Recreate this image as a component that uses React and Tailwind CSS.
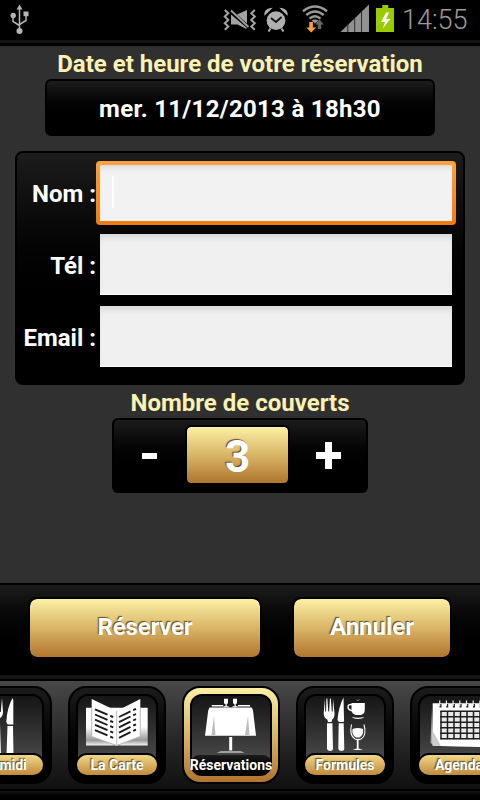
import clsx from 'clsx';

const TABS = [
    { id: 'midi', label: 'Ce midi', Icon: MidiIcon },
    { id: 'carte', label: 'La Carte', Icon: BookIcon },
    { id: 'reservations', label: 'Réservations', Icon: TableIcon },
    { id: 'formules', label: 'Formules', Icon: FormulesIcon },
    { id: 'agenda', label: 'Agenda', Icon: AgendaIcon },
];

const FIELDS = [
    { id: 'nom', label: 'Nom :', focused: true },
    { id: 'tel', label: 'Tél :' },
    { id: 'email', label: 'Email :' },
];

const PANEL = 'border-2 border-black bg-linear-to-b from-[#1c1c1c] to-black to-80%';
const GOLD = 'bg-linear-to-b from-[#fcf0a4] via-[#d9b567] to-[#b0752f]';
const EMBOSSED = 'text-white [text-shadow:-1px_-1px_1px_rgba(50,35,10,0.75)]';

function MidiIcon() {
    return (
        <g fill="#fff">
            <path d="M37 12v14q0 5 3.500 7v4h4v-4q4.500-2 4.500-7l-1-14-1.200 14h-1l-1-14h-1.500l-1 14h-1l-1.500-14z" />
            <path d="M39.500 38h6.500l1 31h-8.500z" />
            <path d="M58.500 12Q53 22 52.300 36l1.400 2.500h5.600V14z" />
            <path d="M53.500 40h5.500l.5 29h-7z" />
        </g>
    );
}

function BookIcon() {
    const rows = [0, 5.2, 10.4, 15.6, 20.8];
    return (
        <g>
            <defs>
                <linearGradient id="page" x1="0" y1="0" x2="0" y2="1">
                    <stop offset="0.5" stopColor="#fff" />
                    <stop offset="0.85" stopColor="#999" />
                    <stop offset="1" stopColor="#fff" />
                </linearGradient>
            </defs>
            <path d="M18 21.700h30.700v38.300q-1.500-1-3.500-.5H18zM79.700 21.700h-31v38.300q1.500-1 3.500-.5h27.500z" fill="url(#page)" />
            <path d="M23.700 13l25 12v34.500l-25-9zM72.300 13L48.700 25v34.500l23.600-9z" fill="#fff" />
            <path d="M48.700 25v34" stroke="#aaa" strokeWidth="0.8" />
            <path d="M23.700 22v28.500l25 9 23.600-9V22" stroke="#aaa" strokeWidth="0.8" fill="none" />
            <g stroke="#1a1a1a" strokeWidth="1.9">
                {rows.map((y) => (
                    <path key={y} d={`M27 ${23.3 + y}l12.500 5.300m2.700 1.200l3 1.200M51 ${31 + y}l11.500-5.700m2.700-1.200l2.800-1.300`} />
                ))}
            </g>
        </g>
    );
}

function TableIcon() {
    return (
        <g>
            <path d="M27.500 21.500h42.300l1.200 3 3 25.200H23l3.200-25.200z" fill="#fff" />
            <path d="M32 30l1.500 19h-4zM66 30l-3 19h4.500z" fill="#bdbdbd" />
            <path d="M29.700 19.700h11.500M56 19.700h12" stroke="#fff" strokeWidth="1.400" />
            <path d="M42 12.800h4v3.700q-.3 1.500-1.300 1.700v2h2v1h-5.200v-1h2v-2q-1.200-.2-1.500-1.700zM51 12.800h4v3.700q-.3 1.500-1.300 1.700v2h2v1h-5.200v-1h2v-2q-1.200-.2-1.500-1.700z" fill="#fff" />
            <path d="M47.200 51h3v13.500h-3z" fill="#fff" />
            <path d="M34.700 66.500l4-1h20l4 1z" fill="#fff" />
        </g>
    );
}

function FormulesIcon() {
    return (
        <g fill="#fff">
            <path d="M29 12.500L27.700 27q0 5 3.600 6.500l.7 2.500h3.500l.7-2.500q2.600-1.500 2.300-6.500L37 12.500l-.3 13h-.9l-1-13h-.9l-.7 13h-.9l-1-13h-.9l-.3 13h-.9z" />
            <path d="M31 37.300h5.400L37 63q-.3 2-2.800 2t-3.200-2z" />
            <path d="M47.500 11.500Q42.500 21 41.500 34l1.500 2h4.700l.3-2z" />
            <path d="M42.700 37.300h5L48.300 63q-.3 2-2.800 2t-3.200-2z" />
            <path d="M55.500 17h13.300v6.500q0 4.500-4 5.500h-5q-4-1-4.300-5.500z" />
            <path d="M56 18.500q-4-.5-4 2.500t5 4" fill="none" stroke="#fff" strokeWidth="1.400" />
            <path d="M55.500 31q6.500 1.500 13 0-2 2-6.500 2t-6.500-2z" />
            <path d="M60.500 14q1.500 1 3-.3" fill="none" stroke="#888" strokeWidth="1" />
            <path d="M55.500 38.500q-2.500 11 3.500 14.500 3 1 6 0 6-3.500 3-14.500" fill="none" stroke="#fff" strokeWidth="1.100" />
            <path d="M56.500 43q5-2 10.500 0 1 6-3.500 8.500h-3.500q-4.500-2.500-3.500-8.500z" />
            <path d="M60.800 53h1.800v9.500l4.500 1.500H56.500l4.300-1.500z" />
        </g>
    );
}

function AgendaIcon() {
    const steps = [0, 1, 2, 3, 4, 5, 6, 7, 8];
    return (
        <g>
            <path d="M22 22l-1.500 35 3 2z" fill="#aaa" />
            <path d="M22.700 17.300H88v43.500q-33 .6-65.300-1z" fill="#fff" />
            <path d="M22.700 45q5 8 8 15l-8-.3z" fill="#ccc" />
            <path d="M30.700 25h52v28h-52z" fill="#e9e9e9" />
            <g stroke="#1d1d1d" strokeWidth="1.500" fill="none">
                {steps.map((i) => (
                    <path key={i} d={`M${31 + i * 6.5} 25v28.300`} />
                ))}
                {steps.slice(0, 6).map((i) => (
                    <path key={i} d={`M30.300 ${25.3 + i * 5.5}h53`} />
                ))}
            </g>
            {steps.map((i) => (
                <g key={i}>
                    <path d={`M${30.5 + i * 6.7} 18v3.500`} stroke="#222" strokeWidth="2" />
                    <path d={`M${29.7 + i * 6.7} 14.500v5.500`} stroke="#eee" strokeWidth="1.200" />
                </g>
            ))}
        </g>
    );
}

const StatusBar = () => (
    <div className="flex h-10 items-center bg-black">
        <svg className="ml-2 h-10 w-6" viewBox="8 0 24 40" fill="none" stroke="#b4b4b4" strokeWidth="1.500">
            <path d="M19.500 9v22M13 16v5.500l6.500 4M26 14v6.500l-6.500 4" />
            <path d="M19.500 4.500l3 5h-6z" fill="#b4b4b4" stroke="none" />
            <circle cx="13.200" cy="15.500" r="2.700" fill="#b4b4b4" stroke="none" />
            <path d="M23.500 11.500h5v4.700h-5z" fill="#b4b4b4" stroke="none" />
            <circle cx="19.500" cy="31" r="3" fill="#b4b4b4" stroke="none" />
        </svg>
        <svg className="ml-auto h-10 w-[176px] shrink-0" viewBox="222 0 176 40" fill="none">
            {/* vibrate / muted */}
            <g stroke="#a3a3a3" strokeWidth="2">
                <path d="M224.800 10l3.500 3.300-3.500 3.300 3.500 3.300-3.500 3.300 3.500 3.300-3.500 3.300" />
                <path d="M254.800 10l-3.500 3.300 3.500 3.300-3.500 3.300 3.500 3.300-3.500 3.300 3.500 3.300" />
            </g>
            <path d="M231 14.500l15.500 13v1.500l-9-4.500H231zM237 14.500l10-4.500v13.500z" fill="#a3a3a3" />
            <path d="M231 10.500l17.500 16.500" stroke="#a3a3a3" strokeWidth="1.800" />
            {/* alarm */}
            <circle cx="276" cy="20.700" r="9.400" fill="#b0b0b0" />
            <path d="M271 18l5 4 5.500-5" stroke="#111" strokeWidth="1.800" />
            <path d="M265 14.500q-.5-5 6-6zM287 14.500q.5-5-6-6z" fill="#b0b0b0" stroke="#b0b0b0" strokeWidth="1.200" />
            <path d="M270.500 28.500l-2 3M281.500 28.500l2 3" stroke="#b0b0b0" strokeWidth="2" />
            {/* wifi */}
            <g stroke="#999" strokeWidth="2.400">
                <path d="M303 11.300q12-9.500 24 0M306.300 15q8.700-7 17.400 0M309.500 18.600q5.500-4.500 11 0" />
            </g>
            <path d="M311.500 20.500q3.500-2 7 0l-3.500 3z" fill="#999" />
            <path d="M309.300 22h3.600v5.500h3.300l-5 5-5-5h3.100z" fill="#f7a136" />
            <path d="M319.500 19.500l4.300 5h-2.600v4.500h-3.400v-4.500h-2.600z" fill="#666" />
            {/* signal */}
            <path d="M340.500 32L369 4.500V32z" fill="#919191" />
            <path d="M347.800 24v8M354.700 18v14M361.500 11v21" stroke="#2b2b2b" strokeWidth="1" />
            {/* battery */}
            <path d="M382.300 5h6v3h5.700v24h-18V8h6.300z" fill="#99cc00" />
            <path d="M386 12.500l-5 9.500h4l-2.200 6.500 7.500-9.500h-4.300l3-6.500z" fill="#fff" />
        </svg>
        <span className="w-[82px] pl-1 text-[27px] leading-[38px] font-light text-[#9a9a9a]">14:55</span>
    </div>
);

const Field = ({ label, focused }) => (
    <label className="flex h-[72px] items-start">
        <span className="w-[79px] text-right text-2xl leading-[74px] font-bold whitespace-nowrap text-white">{label}</span>
        {focused ? (
            <span className="mt-1 flex h-16 w-[360px] rounded-sm bg-linear-to-b from-[#f9a33c] to-[#ec7c12] p-1">
                <span className="flex-1 bg-[#f2f2f2] pt-[11px] pl-3 shadow-[inset_0_5px_6px_-3px_rgba(0,0,0,0.12)]">
                    <span className="block h-8 w-0.5 bg-white" />
                </span>
            </span>
        ) : (
            <span className="mt-[5px] ml-1 h-[61px] w-[352px] border-b border-white bg-[#f0f0f0] shadow-[inset_0_6px_7px_-3px_rgba(0,0,0,0.12)]" />
        )}
    </label>
);

const Tab = ({ label, Icon, active }) => (
    <div
        className={clsx(
            'h-[98px] w-[98px] shrink-0 rounded-[18px] border-2 border-black p-1.5',
            active ? GOLD : 'bg-linear-to-b from-[#1c1c1c] to-black'
        )}
    >
        <div className="flex h-[82px] flex-col rounded-[12px] border-2 border-black bg-linear-to-b from-[#161616] to-[#484848] to-80%">
            <svg className="h-[59px] w-[78px] shrink-0 overflow-visible" viewBox="10 10 78 59">
                <Icon />
            </svg>
            <span
                className={clsx(
                    'z-10 -mx-px flex h-5 items-center justify-center text-sm font-bold whitespace-nowrap',
                    active
                        ? 'rounded-t-lg rounded-b-[10px] bg-linear-to-b from-[#1c1c1c] to-black text-white'
                        : 'rounded-[10px] bg-linear-to-b from-[#f0d887] to-[#c08a3c] shadow-[0_-1px_0_1px_#000] ' + EMBOSSED
                )}
            >
                {label}
            </span>
        </div>
    </div>
);

export default function App() {
    return (
        <div className="flex h-[800px] w-[480px] flex-col overflow-hidden bg-black font-['Roboto',sans-serif]">
            <StatusBar />
            <div className="h-1.5 shrink-0 border-b-[3px] border-black bg-[#141414]" />

            <main className="flex h-[537px] shrink-0 flex-col items-center bg-[#303030]">
                <h2 className="h-[33px] text-2xl leading-[36px] font-bold whitespace-nowrap text-[#fbf1b0]">Date et heure de votre réservation</h2>
                <button className={clsx('h-[57px] w-[390px] rounded-md pt-0.5 text-2xl font-bold tracking-[0.3px] text-white', PANEL)}>
                    mer. 11/12/2013 à 18h30
                </button>

                <form className={clsx('mt-[15px] h-[234px] w-[450px] rounded-lg pt-1', PANEL)}>
                    {FIELDS.map((field) => (
                        <Field key={field.id} {...field} />
                    ))}
                </form>

                <h2 className="h-[33px] text-2xl leading-[36px] font-bold whitespace-nowrap text-[#fbf1b0]">Nombre de couverts</h2>
                <div className={clsx('flex h-[75px] w-64 items-center rounded-md', PANEL)}>
                    <button className="flex w-[71px] justify-center">
                        <span className="h-1.5 w-[15px] bg-white" />
                    </button>
                    <span className={clsx('mb-px flex h-[60px] w-[105px] items-center justify-center rounded-md border-2 border-black bg-clip-padding pt-1 text-[44px] leading-none font-bold', GOLD, EMBOSSED)}>
                        3
                    </span>
                    <button className="flex flex-1 justify-center">
                        <svg className="h-[27px] w-[25px]" viewBox="0 0 25 27" fill="#fff">
                            <path d="M9 0h7v10h9v7h-9v10H9V17H0v-7h9z" />
                        </svg>
                    </button>
                </div>
            </main>

            <footer className="flex h-[92px] shrink-0 items-start border-t-2 border-black bg-linear-to-b from-[#1c1c1c] to-black to-80% pt-3 pl-7">
                <button className={clsx('h-[62px] w-[234px] rounded-[9px] border-2 border-black bg-clip-padding pb-0.5 text-2xl font-bold tracking-[-0.2px]', GOLD, EMBOSSED)}>
                    Réserver
                </button>
                <button className={clsx('ml-[30px] h-[62px] w-40 rounded-[9px] border-2 border-black bg-clip-padding pb-0.5 text-2xl font-bold', GOLD, EMBOSSED)}>
                    Annuler
                </button>
            </footer>

            <div className="h-1.5 shrink-0 border-b-2 border-black bg-[#141414]" />
            <nav className="-ml-[46px] flex h-[108px] w-[554px] shrink-0 gap-4 bg-linear-to-b from-[#484848] to-[#101010] pt-[5px]">
                {TABS.map((tab) => (
                    <Tab key={tab.id} {...tab} active={tab.id === 'reservations'} />
                ))}
            </nav>
            <div className="h-[11px] shrink-0 border-t-2 border-black bg-linear-to-b from-[#141414] to-black" />
        </div>
    );
}
